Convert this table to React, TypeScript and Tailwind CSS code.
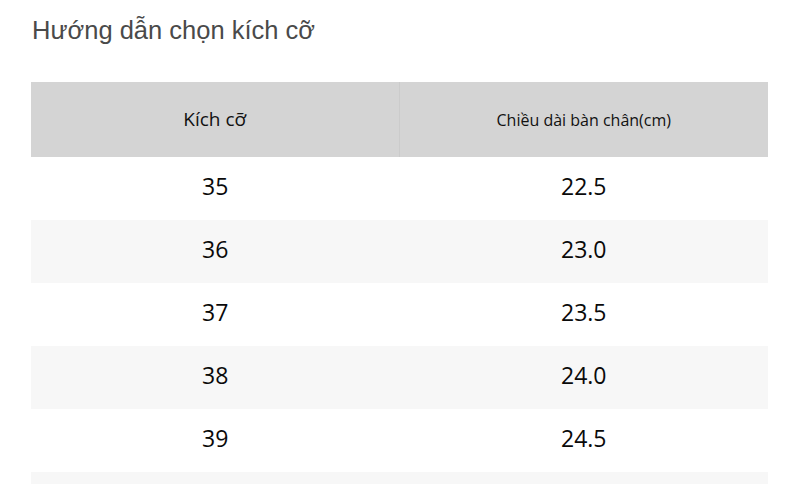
import React from 'react';

const rows = [
  ['35', '22.5'],
  ['36', '23.0'],
  ['37', '23.5'],
  ['38', '24.0'],
  ['39', '24.5'],
];

export default function App() {
  return (
    <div className="w-[800px] h-[484px] overflow-hidden bg-white">
      <div className="pl-[32px] pt-[13px]">
        <h1
          className="text-[25.5px] leading-[34px] text-[#4a4a4a]"
          style={{ fontFamily: '"Liberation Sans", Arial, sans-serif' }}
        >
          Hướng dẫn chọn kích cỡ
        </h1>
      </div>
      <div
        className="mt-[35px] ml-[31px] w-[737px]"
        style={{ fontFamily: '"Open Sans", "Noto Sans", sans-serif' }}
      >
        {/* Header */}
        <div className="grid grid-cols-2 h-[75px] bg-[#d4d4d4] text-[#111]">
          <div className="flex items-center justify-center text-[19px] border-r border-[#cbcbcb]">Kích cỡ</div>
          <div className="flex items-center justify-center text-[16px]">Chiều dài bàn chân(cm)</div>
        </div>
        {rows.map(([size, len], i) => (
          <div
            key={size}
            className={`grid grid-cols-2 h-[63px] text-[23px] text-[#0a0a0a] ${i % 2 === 1 ? 'bg-[#f7f7f7]' : 'bg-white'}`}
          >
            <div className="flex items-center justify-center pb-[4px]">{size}</div>
            <div className="flex items-center justify-center pb-[4px]">{len}</div>
          </div>
        ))}
        {/* next stripe, text falls below the fold */}
        <div className="h-[63px] bg-[#f7f7f7]" />
      </div>
    </div>
  );
}
